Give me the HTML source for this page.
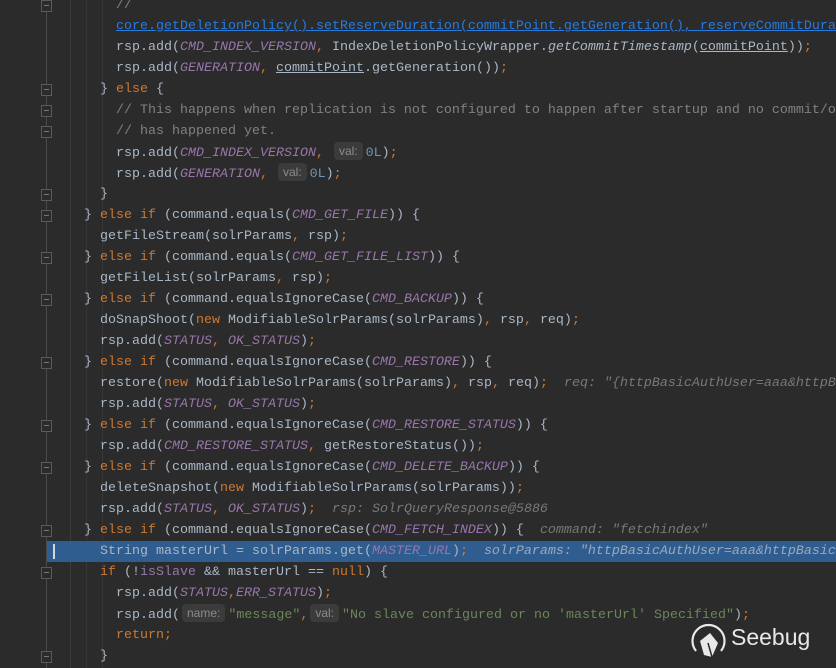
<!DOCTYPE html>
<html><head><meta charset="utf-8"><style>
html,body{margin:0;padding:0;background:#2b2b2b;width:836px;height:668px;overflow:hidden;position:relative}
.l{position:absolute;left:0;height:21px;line-height:21px;white-space:pre;font-family:"Liberation Mono",monospace;font-size:13.33px;color:#a9b7c6;width:836px}
.k{color:#cc7832}.c{color:#9876aa;font-style:italic}.f{color:#9876aa}.s{color:#6a8759}.n{color:#6897bb}.cm{color:#808080}
.lnk{color:#287bde;text-decoration:underline}.i{font-style:italic}.u{text-decoration:underline}
.h{color:#787878;font-style:italic}
.b{display:inline-block;font-family:"Liberation Sans",sans-serif;font-style:normal;font-size:12px;color:#8c8c8c;background:#3b3b3b;border-radius:4px;line-height:18px;padding:0 5px;margin:0 3px 0 2px;vertical-align:1px}
.t{position:absolute}
.sel{position:absolute;left:47px;top:541px;width:789px;height:21px;background:#2f5d8f}
.fold{position:absolute;left:41px;width:9px;height:10px;border:1px solid #5a5a5a;background:#2b2b2b}
.fold:after{content:"";position:absolute;left:2px;top:4px;width:5px;height:1px;background:#777}
</style></head><body>
<div style="position:absolute;left:46px;top:0;width:1px;height:668px;background:#4a4a4a"></div>
<div style="position:absolute;left:70px;top:0;width:1px;height:668px;background:#3c3c3c"></div>
<div style="position:absolute;left:86px;top:0;width:1px;height:668px;background:#363636"></div>
<div style="position:absolute;left:102px;top:0;width:1px;height:668px;background:#363636"></div>
<div class="sel"></div>
<div style="position:absolute;left:53px;top:544px;width:2px;height:15px;background:#cfd8e0"></div>
<div class="fold" style="top:0px"></div>
<div class="fold" style="top:84px"></div>
<div class="fold" style="top:105px"></div>
<div class="fold" style="top:126px"></div>
<div class="fold" style="top:189px"></div>
<div class="fold" style="top:210px"></div>
<div class="fold" style="top:252px"></div>
<div class="fold" style="top:294px"></div>
<div class="fold" style="top:357px"></div>
<div class="fold" style="top:420px"></div>
<div class="fold" style="top:462px"></div>
<div class="fold" style="top:525px"></div>
<div class="fold" style="top:567px"></div>
<div class="fold" style="top:651px"></div>

<div class="l" style="top:-5px"><span class="t" style="left:116px"><span class="cm">//</span></span></div>
<div class="l" style="top:16px"><span class="t" style="left:116px"><span class="lnk">core.getDeletionPolicy().setReserveDuration(commitPoint.getGeneration(), reserveCommitDura</span></span></div>
<div class="l" style="top:37px"><span class="t" style="left:116px">rsp.add(<span class="c">CMD_INDEX_VERSION</span><span class="k">, </span>IndexDeletionPolicyWrapper.<span class="i">getCommitTimestamp</span>(<span class="u">commitPoint</span>))<span class="k">;</span></span></div>
<div class="l" style="top:58px"><span class="t" style="left:116px">rsp.add(<span class="c">GENERATION</span><span class="k">, </span><span class="u">commitPoint</span>.getGeneration())<span class="k">;</span></span></div>
<div class="l" style="top:79px"><span class="t" style="left:100px">} <span class="k">else </span>{</span></div>
<div class="l" style="top:100px"><span class="t" style="left:116px"><span class="cm">// This happens when replication is not configured to happen after startup and no commit/o</span></span></div>
<div class="l" style="top:121px"><span class="t" style="left:116px"><span class="cm">// has happened yet.</span></span></div>
<div class="l" style="top:142px"><span class="t" style="left:116px">rsp.add(<span class="c">CMD_INDEX_VERSION</span><span class="k">, </span><span class="b">val:</span><span class="n">0L</span>)<span class="k">;</span></span></div>
<div class="l" style="top:163px"><span class="t" style="left:116px">rsp.add(<span class="c">GENERATION</span><span class="k">, </span><span class="b">val:</span><span class="n">0L</span>)<span class="k">;</span></span></div>
<div class="l" style="top:184px"><span class="t" style="left:100px">}</span></div>
<div class="l" style="top:205px"><span class="t" style="left:84px">} <span class="k">else if </span>(command.equals(<span class="c">CMD_GET_FILE</span>)) {</span></div>
<div class="l" style="top:226px"><span class="t" style="left:100px">getFileStream(solrParams<span class="k">, </span>rsp)<span class="k">;</span></span></div>
<div class="l" style="top:247px"><span class="t" style="left:84px">} <span class="k">else if </span>(command.equals(<span class="c">CMD_GET_FILE_LIST</span>)) {</span></div>
<div class="l" style="top:268px"><span class="t" style="left:100px">getFileList(solrParams<span class="k">, </span>rsp)<span class="k">;</span></span></div>
<div class="l" style="top:289px"><span class="t" style="left:84px">} <span class="k">else if </span>(command.equalsIgnoreCase(<span class="c">CMD_BACKUP</span>)) {</span></div>
<div class="l" style="top:310px"><span class="t" style="left:100px">doSnapShoot(<span class="k">new </span>ModifiableSolrParams(solrParams)<span class="k">, </span>rsp<span class="k">, </span>req)<span class="k">;</span></span></div>
<div class="l" style="top:331px"><span class="t" style="left:100px">rsp.add(<span class="c">STATUS</span><span class="k">, </span><span class="c">OK_STATUS</span>)<span class="k">;</span></span></div>
<div class="l" style="top:352px"><span class="t" style="left:84px">} <span class="k">else if </span>(command.equalsIgnoreCase(<span class="c">CMD_RESTORE</span>)) {</span></div>
<div class="l" style="top:373px"><span class="t" style="left:100px">restore(<span class="k">new </span>ModifiableSolrParams(solrParams)<span class="k">, </span>rsp<span class="k">, </span>req)<span class="k">;</span>  <span class="h">req: "{httpBasicAuthUser=aaa&amp;httpBa</span></span></div>
<div class="l" style="top:394px"><span class="t" style="left:100px">rsp.add(<span class="c">STATUS</span><span class="k">, </span><span class="c">OK_STATUS</span>)<span class="k">;</span></span></div>
<div class="l" style="top:415px"><span class="t" style="left:84px">} <span class="k">else if </span>(command.equalsIgnoreCase(<span class="c">CMD_RESTORE_STATUS</span>)) {</span></div>
<div class="l" style="top:436px"><span class="t" style="left:100px">rsp.add(<span class="c">CMD_RESTORE_STATUS</span><span class="k">, </span>getRestoreStatus())<span class="k">;</span></span></div>
<div class="l" style="top:457px"><span class="t" style="left:84px">} <span class="k">else if </span>(command.equalsIgnoreCase(<span class="c">CMD_DELETE_BACKUP</span>)) {</span></div>
<div class="l" style="top:478px"><span class="t" style="left:100px">deleteSnapshot(<span class="k">new </span>ModifiableSolrParams(solrParams))<span class="k">;</span></span></div>
<div class="l" style="top:499px"><span class="t" style="left:100px">rsp.add(<span class="c">STATUS</span><span class="k">, </span><span class="c">OK_STATUS</span>)<span class="k">;</span>  <span class="h">rsp: SolrQueryResponse@5886</span></span></div>
<div class="l" style="top:520px"><span class="t" style="left:84px">} <span class="k">else if </span>(command.equalsIgnoreCase(<span class="c">CMD_FETCH_INDEX</span>)) {  <span class="h">command: "fetchindex"</span></span></div>
<div class="l" style="top:541px"><span class="t" style="left:100px">String masterUrl = solrParams.get(<span class="c">MASTER_URL</span>)<span class="k">;</span>  <span class="h" style="color:#9aa9bd">solrParams: "httpBasicAuthUser=aaa&amp;httpBasic</span></span></div>
<div class="l" style="top:562px"><span class="t" style="left:100px"><span class="k">if </span>(!<span class="f">isSlave</span> &amp;&amp; masterUrl == <span class="k">null</span>) {</span></div>
<div class="l" style="top:583px"><span class="t" style="left:116px">rsp.add(<span class="c">STATUS</span><span class="k">,</span><span class="c">ERR_STATUS</span>)<span class="k">;</span></span></div>
<div class="l" style="top:604px"><span class="t" style="left:116px">rsp.add(<span class="b">name:</span><span class="s">"message"</span><span class="k">,</span><span class="b">val:</span><span class="s">"No slave configured or no 'masterUrl' Specified"</span>)<span class="k">;</span></span></div>
<div class="l" style="top:625px"><span class="t" style="left:116px"><span class="k">return;</span></span></div>
<div class="l" style="top:646px"><span class="t" style="left:100px">}</span></div>

<svg style="position:absolute;left:688px;top:621px" width="40" height="40" viewBox="0 0 40 40">
<path d="M8 30 A16 16 0 1 1 33 30" fill="none" stroke="#e8e8e8" stroke-width="2.2"/>
<path d="M12 20 L22 12 L30 22 L24 36 L16 34 Z" fill="#e8e8e8"/>
<path d="M20 22 L24 36" stroke="#2b2b2b" stroke-width="1.5"/>
</svg>
<div style="position:absolute;left:731px;top:624px;font-family:'Liberation Sans',sans-serif;font-size:23px;color:#e8e8e8">Seebug</div>
</body></html>
